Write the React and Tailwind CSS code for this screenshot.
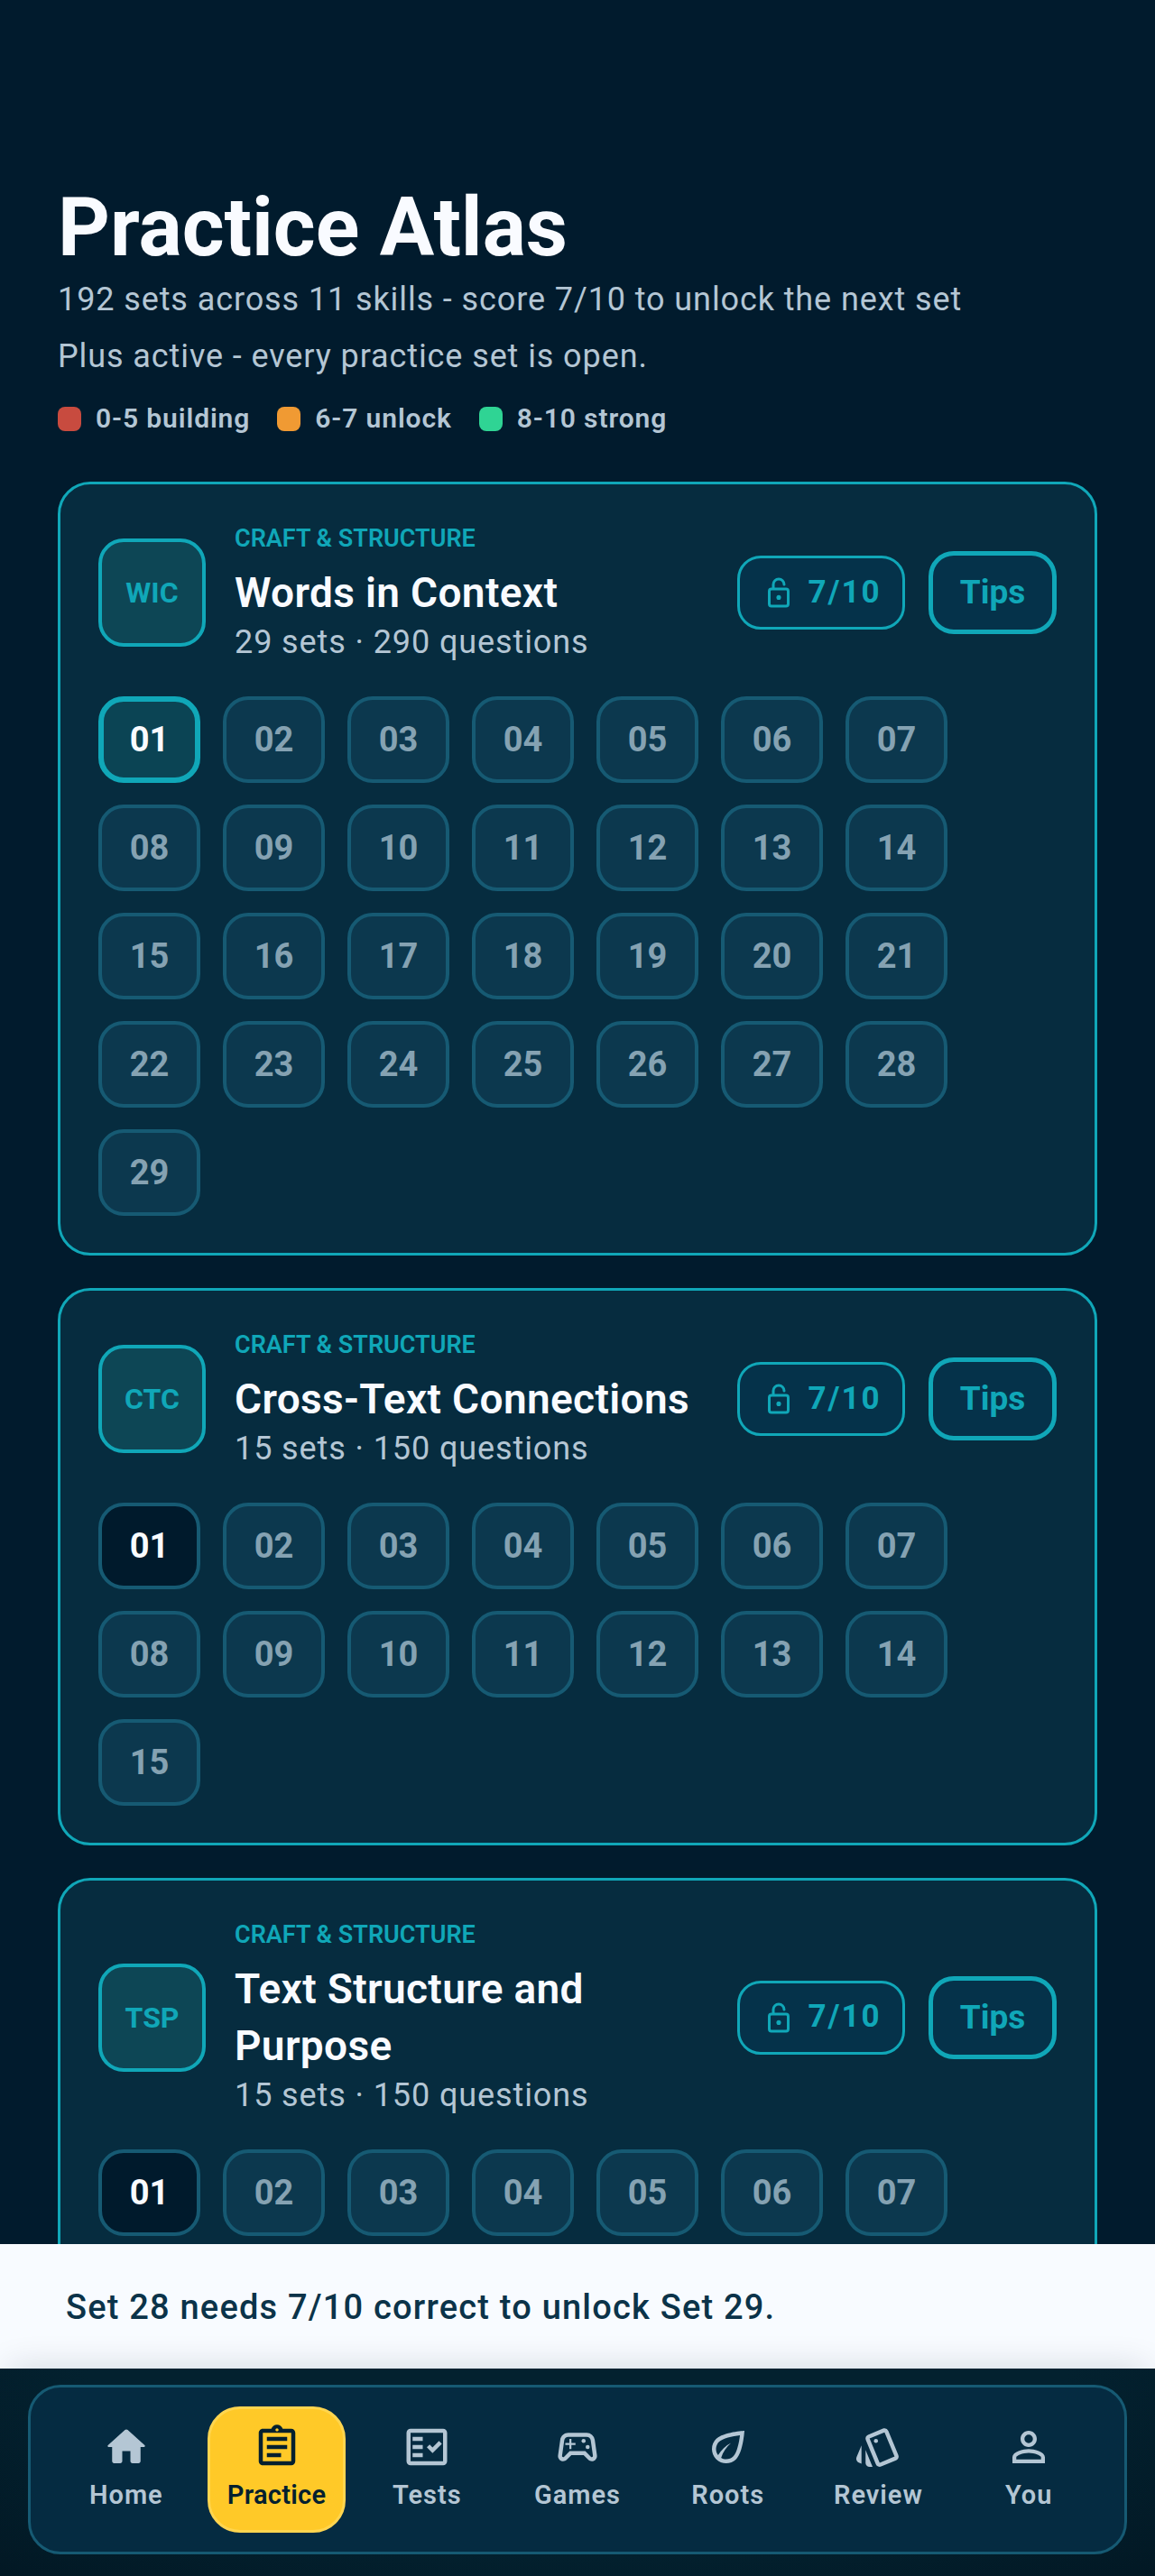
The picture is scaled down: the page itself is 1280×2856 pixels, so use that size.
import React from 'react';
import {
  MdOutlineAssignment,
  MdOutlineFactCheck,
  MdOutlineSportsEsports,
  MdOutlineEco,
  MdOutlineStyle,
  MdPersonOutline,
} from 'react-icons/md';

const HomeIcon = ({ className }) => (
  <svg viewBox="0 0 24 24" fill="currentColor" className={className}>
    <path d="M10 19v-5h4v5c0 .55.45 1 1 1h3c.55 0 1-.45 1-1v-7h1.7c.46 0 .68-.57.33-.87L12.67 3.6c-.38-.34-.96-.34-1.34 0l-8.36 7.53c-.34.3-.13.87.33.87H5v7c0 .55.45 1 1 1h3c.55 0 1-.45 1-1z" />
  </svg>
);

const LockIcon = ({ className }) => (
  <svg viewBox="0 0 24 24" fill="none" stroke="currentColor" strokeWidth="2" strokeLinecap="round" className={className}>
    <rect x="5" y="9.4" width="14" height="12.6" rx="1.6" />
    <path d="M8 9V6a4 4 0 0 1 8 0" />
    <circle cx="12" cy="15.6" r="1.7" fill="currentColor" stroke="none" />
  </svg>
);

const skills = [
  { code: 'WIC', name: 'Words in Context', sets: 29, firstActive: true },
  { code: 'CTC', name: 'Cross-Text Connections', sets: 15 },
  { code: 'TSP', name: 'Text Structure and Purpose', sets: 15 },
];

const navItems = [
  { label: 'Home', Icon: HomeIcon },
  { label: 'Practice', Icon: MdOutlineAssignment, active: true },
  { label: 'Tests', Icon: MdOutlineFactCheck },
  { label: 'Games', Icon: MdOutlineSportsEsports },
  { label: 'Roots', Icon: MdOutlineEco },
  { label: 'Review', Icon: MdOutlineStyle },
  { label: 'You', Icon: MdPersonOutline },
];

const legend = [
  { color: 'bg-[#c84b3f]', label: '0-5 building' },
  { color: 'bg-[#f09a33]', label: '6-7 unlock' },
  { color: 'bg-[#2fd494]', label: '8-10 strong' },
];

const SetTile = ({ n, first, firstActive }) => {
  let look = 'border-[4px] border-[#165a73] bg-[#0c384e] text-[#85a2b2]';
  if (first && firstActive) look = 'border-[6px] border-[#10a7b8] bg-[#0b4454] text-[#f9fbff]';
  else if (first) look = 'border-[4px] border-[#165a73] bg-[#001a2c] text-[#f9fbff]';

  return (
    <div className={`w-[113px] h-[96px] rounded-[28px] flex items-center justify-center text-[38px] font-bold ${look}`}>
      {String(n).padStart(2, '0')}
    </div>
  );
};

const SkillCard = ({ skill }) => (
  <div className="rounded-[36px] border-[3px] border-[#10a7b8] bg-[#062c3f] px-[42px] pt-[42px] pb-[41px]">
    <div className="flex items-center gap-[32px]">
      <div className="w-[119px] h-[120px] shrink-0 rounded-[28px] border-[4px] border-[#10a7b8] bg-[#0d4655] flex items-center justify-center text-[32px] font-bold text-[#10a7b8]">
        {skill.code}
      </div>
      <div className="flex-1 min-w-0">
        <div className="mb-[11px] text-[27px] leading-[36px] font-semibold text-[#10a7b8]">CRAFT &amp; STRUCTURE</div>
        <div className="text-[46px] leading-[63px] tracking-[0.35px] font-semibold text-[#f9fbff]">{skill.name}</div>
        <div className="text-[36px] leading-[46px] tracking-[0.9px] text-[#b4c6d4]">
          {skill.sets} sets · {skill.sets * 10} questions
        </div>
      </div>
      <div className="flex items-center gap-[26px] shrink-0">
        <div className="h-[82px] w-[186px] rounded-[26px] border-[3px] border-[#10a7b8] bg-[#05324a] flex items-center justify-center gap-[14px] pl-[2px] text-[35px] tracking-[2px] font-bold text-[#10a7b8]">
          <LockIcon className="w-[36px] h-[36px]" />
          7/10
        </div>
        <div className="h-[92px] w-[142px] rounded-[28px] border-[5px] border-[#10a7b8] bg-[#05324a] flex items-center justify-center text-[37px] font-bold text-[#10a7b8]">
          Tips
        </div>
      </div>
    </div>
    <div className="mt-[37px] flex flex-wrap gap-x-[25px] gap-y-[24px]">
      {Array.from({ length: skill.sets }, (_, i) => (
        <SetTile key={i} n={i + 1} first={i === 0} firstActive={skill.firstActive} />
      ))}
    </div>
  </div>
);

export default function App() {
  return (
    <div className="w-[1280px] h-[2856px] flex flex-col overflow-hidden bg-[#011b2d] font-['Roboto',sans-serif]">
      <div className="h-[2488px] shrink-0 overflow-hidden px-[64px] pt-[204px]">
        <h1 className="text-[90px] leading-[97px] font-bold text-[#f9fbff]">Practice Atlas</h1>
        <p className="text-[36px] leading-[63px] tracking-[0.9px] text-[#b4c6d4]">
          192 sets across 11 skills - score 7/10 to unlock the next set
        </p>
        <p className="text-[36px] leading-[63px] tracking-[0.9px] text-[#b4c6d4]">Plus active - every practice set is open.</p>
        <div className="mt-[17px] flex items-center gap-[30px]">
          {legend.map((item) => (
            <div key={item.label} className="flex items-center gap-[16px]">
              <span className={`w-[26px] h-[27px] rounded-[8px] ${item.color}`} />
              <span className="text-[30px] leading-[40px] font-semibold tracking-[0.9px] text-[#b4c6d4]">{item.label}</span>
            </div>
          ))}
        </div>
        <div className="mt-[50px] flex flex-col gap-[36px]">
          {skills.map((skill) => (
            <SkillCard key={skill.code} skill={skill} />
          ))}
        </div>
      </div>

      <div className="h-[138px] shrink-0 bg-[#f8fbff] flex items-center px-[73px] pt-[3px]">
        <p className="text-[38px] font-medium tracking-[1.2px] text-[#0b3349]">Set 28 needs 7/10 correct to unlock Set 29.</p>
      </div>

      <div className="relative flex-1 bg-[radial-gradient(ellipse_at_top,#03212f_60%,#021824_100%)] px-[31px] pt-[18px] shadow-[0_-10px_36px_-10px_rgba(0,26,44,0.16)]">
        <nav className="h-[188px] rounded-[36px] border-[3px] border-[#165a73] bg-[#052b41] px-[29px] grid grid-cols-7 gap-[13px] items-center">
          {navItems.map(({ label, Icon, active }) => (
            <div
              key={label}
              className={`h-[140px] rounded-[36px] flex flex-col items-center ${
                active ? 'bg-[#ffc928] border-[3px] border-[#ffd54f] text-[#04202f] pt-[15px]' : 'text-[#b4c6d4] pt-[18px]'
              }`}
            >
              <Icon className="w-[54px] h-[54px]" />
              <span className={`mt-[6px] text-[29px] leading-[40px] font-semibold ${active ? 'tracking-[0.3px]' : 'tracking-[1px]'}`}>
                {label}
              </span>
            </div>
          ))}
        </nav>
      </div>
    </div>
  );
}
